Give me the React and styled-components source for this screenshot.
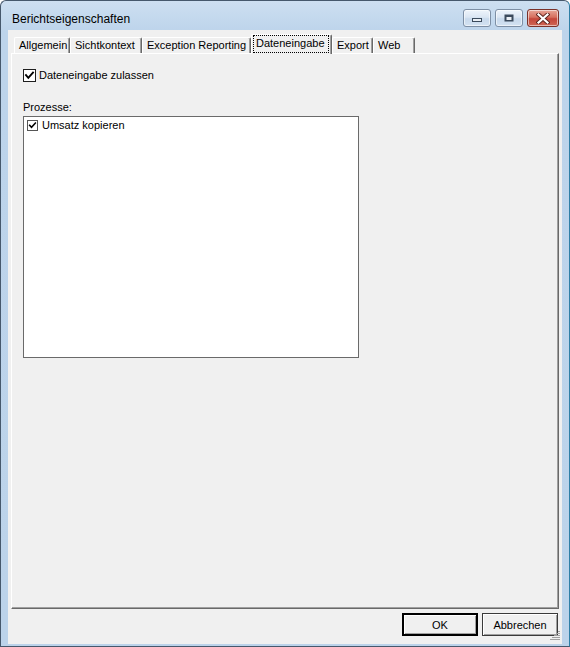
import React from 'react';
import styled, { createGlobalStyle } from 'styled-components';

const Global = createGlobalStyle`
  html, body { margin: 0; padding: 0; background: #ffffff; }
  body {
    font-family: "Liberation Sans", Arial, sans-serif;
    font-size: 11px;
    color: #000;
  }
  * { box-sizing: border-box; }
`;

const Window = styled.div`
  width: 570px;
  height: 647px;
  display: flex;
  flex-direction: column;
  background: linear-gradient(180deg, #cddff1 0px, #bdd4eb 30px, #bcd3ea 100%);
  border: 1px solid #46586c;
  border-right-color: #2f7fa6;
  border-radius: 6px 6px 0 0;
  padding: 0 7px 2px 7px;
`;

const TitleBar = styled.div`
  height: 29px;
  display: flex;
  align-items: flex-start;
  padding: 0 3px 0 4px;
`;

const Title = styled.div`
  font-size: 12px;
  line-height: 14px;
  padding-top: 11px;
  color: #000;
`;

const Controls = styled.div`
  margin-left: auto;
  margin-top: 8px;
  display: flex;
  gap: 4px;
`;

const CtrlButton = styled.div`
  width: ${p => (p.$close ? 32 : 28)}px;
  height: 18px;
  border-radius: 3px;
  border: 1px solid ${p => (p.$close ? '#7a3129' : '#7d8fa5')};
  background: ${p =>
    p.$close
      ? 'linear-gradient(180deg, #e6a597 0%, #d7705f 45%, #c4463a 55%, #cf6655 100%)'
      : 'linear-gradient(180deg, #eef4fb 0%, #dbe6f3 45%, #c8d9ec 55%, #d3e2f2 100%)'};
  box-shadow: inset 0 0 0 1px rgba(255, 255, 255, 0.55);
  display: flex;
  align-items: center;
  justify-content: center;
`;

const Client = styled.div`
  flex: 1;
  background: #f0f0f0;
  display: flex;
  flex-direction: column;
  padding: 4px 3px 0 3px;
  position: relative;
`;

const TabStrip = styled.div`
  display: flex;
  align-items: flex-start;
  height: 20px;
  margin-left: 3px;
  margin-bottom: -1px;
  position: relative;
  z-index: 1;
`;

const Tab = styled.div`
  width: ${p => p.$w}px;
  height: ${p => (p.$active ? 20 : 16)}px;
  margin-top: ${p => (p.$active ? 0 : 3)}px;
  background: #f0f0f0;
  border-top: 1px solid #fff;
  border-left: 1px solid #fff;
  border-right: 1px solid #696969;
  box-shadow: inset -1px 0 0 #a0a0a0;
  border-radius: 2px 2px 0 0;
  padding: ${p => (p.$active ? '0 2px 0 1px' : '0 0 0 4px')};
  line-height: 14px;
  white-space: nowrap;
  overflow: hidden;
`;

const Focus = styled.div`
  height: 18px;
  border: 1px dotted #000;
  padding-left: 2px;
  line-height: 14px;
`;

const Panel = styled.div`
  height: 556px;
  border-top: 1px solid #fff;
  border-left: 1px solid #fff;
  border-right: 1px solid #696969;
  border-bottom: 1px solid #696969;
  box-shadow: inset -1px -1px 0 #a0a0a0;
  padding: 15px 0 0 11px;
  display: flex;
  flex-direction: column;
`;

const CheckRow = styled.label`
  display: flex;
  align-items: center;
  gap: ${p => (p.$small ? 4 : 3)}px;
  height: 13px;
  line-height: 13px;
`;

const Box = styled.span`
  width: ${p => (p.$small ? 11 : 13)}px;
  height: ${p => (p.$small ? 11 : 13)}px;
  border: 1px solid ${p => (p.$small ? '#555' : '#1e1e1e')};
  background: #fff;
  display: flex;
  align-items: center;
  justify-content: center;
  flex: none;
`;

const GroupLabel = styled.div`
  margin-top: 19px;
  line-height: 13px;
  height: 13px;
`;

const ListBox = styled.div`
  margin-top: 2px;
  width: 336px;
  height: 242px;
  border: 1px solid #6a6a6a;
  background: #fff;
  padding: 2px 3px;
`;

const ButtonRow = styled.div`
  margin-top: 4px;
  display: flex;
  justify-content: flex-end;
  gap: 4px;
  padding-right: 1px;
`;

const Button = styled.button`
  width: 76px;
  height: 23px;
  font-family: "Liberation Sans", Arial, sans-serif;
  font-size: 11px;
  color: #000;
  background: #f0f0f0;
  border: ${p => (p.$default ? '2px solid #000' : '1px solid #3a3a3a')};
  box-shadow: inset 1px 1px 0 #fff, inset -1px -1px 0 #a0a0a0;
  padding: 0;
  line-height: 14px;
`;

const Grip = styled.svg`
  position: absolute;
  right: 1px;
  bottom: 2px;
`;

const Check = ({ small }) => (
  <svg width={small ? 9 : 11} height={small ? 9 : 11} viewBox="0 0 11 11">
    <polyline points="2,5.2 4.3,7.8 9,2.6" fill="none" stroke="#000" strokeWidth="1.9" strokeLinecap="square" />
  </svg>
);

const MinIcon = () => (
  <svg width="12" height="10" viewBox="0 0 12 10">
    <rect x="1.5" y="5.5" width="9" height="3" fill="#e9eef4" stroke="#3b4a5c" />
  </svg>
);

const MaxIcon = () => (
  <svg width="12" height="10" viewBox="0 0 12 10">
    <rect x="1.5" y="1.5" width="9" height="7" fill="#3b4a5c" />
    <rect x="3.5" y="4" width="5" height="3" fill="#e9eef4" />
  </svg>
);

const CloseIcon = () => (
  <svg width="14" height="11" viewBox="0 0 14 11">
    <path d="M2.5 1.5 L11.5 9.5 M11.5 1.5 L2.5 9.5" stroke="#5a231d" strokeWidth="4" strokeLinecap="square" />
    <path d="M2.5 1.5 L11.5 9.5 M11.5 1.5 L2.5 9.5" stroke="#fff" strokeWidth="2.2" strokeLinecap="square" />
  </svg>
);

const tabs = [
  { label: 'Allgemein', w: 56 },
  { label: 'Sichtkontext', w: 72 },
  { label: 'Exception Reporting', w: 109 },
  { label: 'Dateneingabe', w: 81, active: true },
  { label: 'Export', w: 41 },
  { label: 'Web', w: 42 },
];

export default function App() {
  return (
    <>
      <Global />
      <Window>
        <TitleBar>
          <Title>Berichtseigenschaften</Title>
          <Controls>
            <CtrlButton><MinIcon /></CtrlButton>
            <CtrlButton><MaxIcon /></CtrlButton>
            <CtrlButton $close><CloseIcon /></CtrlButton>
          </Controls>
        </TitleBar>
        <Client>
          <TabStrip>
            {tabs.map(t => (
              <Tab key={t.label} $w={t.w} $active={t.active}>
                {t.active ? <Focus>{t.label}</Focus> : t.label}
              </Tab>
            ))}
          </TabStrip>
          <Panel>
            <CheckRow>
              <Box><Check /></Box>
              <span>Dateneingabe zulassen</span>
            </CheckRow>
            <GroupLabel>Prozesse:</GroupLabel>
            <ListBox>
              <CheckRow $small>
                <Box $small><Check small /></Box>
                <span>Umsatz kopieren</span>
              </CheckRow>
            </ListBox>
          </Panel>
          <ButtonRow>
            <Button $default>OK</Button>
            <Button>Abbrechen</Button>
          </ButtonRow>
          <Grip width="12" height="12" viewBox="0 0 12 12">
            <g fill="#a0a0a0">
              <rect x="9" y="1" width="2" height="1" />
              <rect x="7" y="3" width="2" height="1" />
              <rect x="9" y="3" width="2" height="1" />
              <rect x="5" y="5" width="2" height="1" />
              <rect x="7" y="5" width="2" height="1" />
              <rect x="9" y="5" width="2" height="1" />
              <rect x="3" y="7" width="2" height="1" />
              <rect x="5" y="7" width="2" height="1" />
              <rect x="7" y="7" width="2" height="1" />
              <rect x="9" y="7" width="2" height="1" />
              <rect x="1" y="9" width="2" height="1" />
              <rect x="3" y="9" width="2" height="1" />
              <rect x="5" y="9" width="2" height="1" />
              <rect x="7" y="9" width="2" height="1" />
              <rect x="9" y="9" width="2" height="1" />
            </g>
          </Grip>
        </Client>
      </Window>
    </>
  );
}
